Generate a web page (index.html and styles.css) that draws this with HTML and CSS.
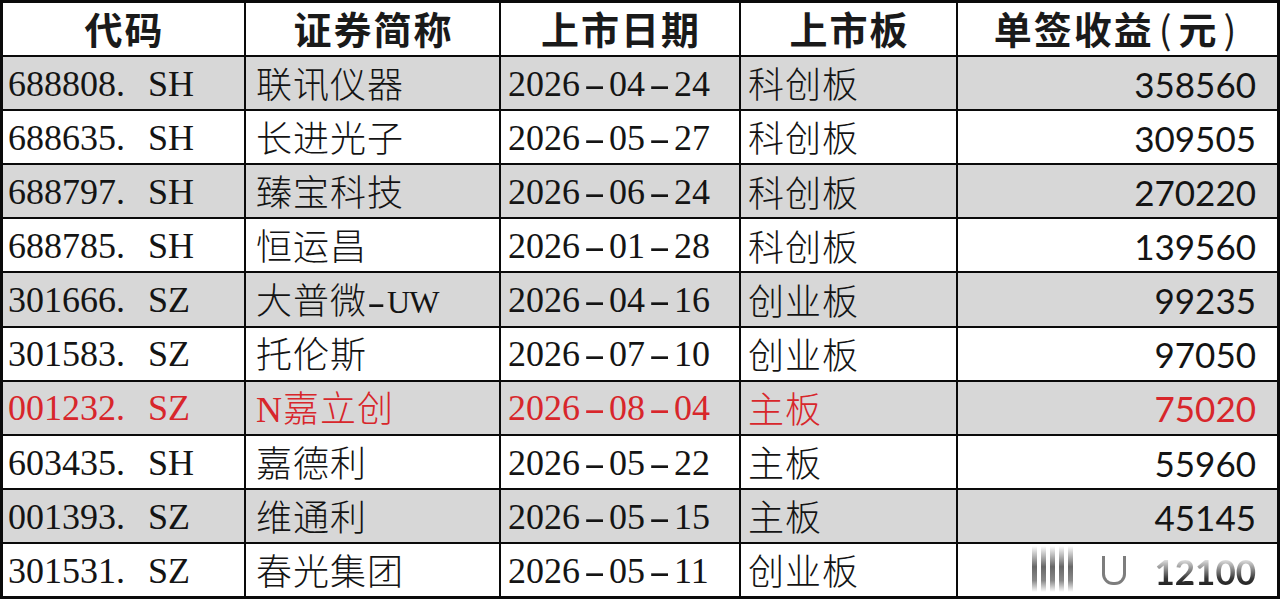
FILE: index.html
```html
<!DOCTYPE html>
<html lang="zh-CN">
<head>
<meta charset="utf-8">
<title>新股单签收益</title>
<link rel="stylesheet" href="styles.css">
</head>
<body>
<div class="table">
  <div class="row head">
    <div class="cell">代码</div>
    <div class="cell">证券简称</div>
    <div class="cell">上市日期</div>
    <div class="cell">上市板</div>
    <div class="cell">单签收益<span class="paren">(</span>元<span class="paren">)</span></div>
  </div>
  <div class="row gray">
    <div class="cell code">688808. SH</div>
    <div class="cell name">联讯仪器</div>
    <div class="cell date">2026<span class="dash">-</span>04<span class="dash">-</span>24</div>
    <div class="cell board">科创板</div>
    <div class="cell num">358560</div>
  </div>
  <div class="row">
    <div class="cell code">688635. SH</div>
    <div class="cell name">长进光子</div>
    <div class="cell date">2026<span class="dash">-</span>05<span class="dash">-</span>27</div>
    <div class="cell board">科创板</div>
    <div class="cell num">309505</div>
  </div>
  <div class="row gray">
    <div class="cell code">688797. SH</div>
    <div class="cell name">臻宝科技</div>
    <div class="cell date">2026<span class="dash">-</span>06<span class="dash">-</span>24</div>
    <div class="cell board">科创板</div>
    <div class="cell num">270220</div>
  </div>
  <div class="row">
    <div class="cell code">688785. SH</div>
    <div class="cell name">恒运昌</div>
    <div class="cell date">2026<span class="dash">-</span>01<span class="dash">-</span>28</div>
    <div class="cell board">科创板</div>
    <div class="cell num">139560</div>
  </div>
  <div class="row gray">
    <div class="cell code">301666. SZ</div>
    <div class="cell name">大普微<span class="dash">-</span><span class="latin">UW</span></div>
    <div class="cell date">2026<span class="dash">-</span>04<span class="dash">-</span>16</div>
    <div class="cell board">创业板</div>
    <div class="cell num">99235</div>
  </div>
  <div class="row">
    <div class="cell code">301583. SZ</div>
    <div class="cell name">托伦斯</div>
    <div class="cell date">2026<span class="dash">-</span>07<span class="dash">-</span>10</div>
    <div class="cell board">创业板</div>
    <div class="cell num">97050</div>
  </div>
  <div class="row gray red">
    <div class="cell code">001232. SZ</div>
    <div class="cell name">N嘉立创</div>
    <div class="cell date">2026<span class="dash">-</span>08<span class="dash">-</span>04</div>
    <div class="cell board">主板</div>
    <div class="cell num">75020</div>
  </div>
  <div class="row">
    <div class="cell code">603435. SH</div>
    <div class="cell name">嘉德利</div>
    <div class="cell date">2026<span class="dash">-</span>05<span class="dash">-</span>22</div>
    <div class="cell board">主板</div>
    <div class="cell num">55960</div>
  </div>
  <div class="row gray">
    <div class="cell code">001393. SZ</div>
    <div class="cell name">维通利</div>
    <div class="cell date">2026<span class="dash">-</span>05<span class="dash">-</span>15</div>
    <div class="cell board">主板</div>
    <div class="cell num">45145</div>
  </div>
  <div class="row">
    <div class="cell code">301531. SZ</div>
    <div class="cell name">春光集团</div>
    <div class="cell date">2026<span class="dash">-</span>05<span class="dash">-</span>11</div>
    <div class="cell board">创业板</div>
    <div class="cell num last">
      <span class="faded">12100</span>
      <span class="streaks"><i></i><i></i><i></i><i></i><i></i></span>
      <span class="ushape"></span>
    </div>
  </div>
</div>
</body>
</html>
```

FILE: styles.css
```css
html, body {
  margin: 0;
  padding: 0;
  background: #ffffff;
}

.table {
  width: 1280px;
  height: 599px;
  box-sizing: border-box;
  padding: 3px;
  background: #0a0a0a;
  display: flex;
  flex-direction: column;
  gap: 2px;
  color: #141414;
}

.row {
  flex: 1 1 0;
  min-height: 0;
  display: grid;
  grid-template-columns: 241px 253px 238px 215px 1fr;
  gap: 2px;
}

.cell {
  background: #ffffff;
  display: flex;
  align-items: center;
  white-space: nowrap;
  line-height: 1.1;
  min-height: 0;
}

.gray .cell {
  background: #d7d7d7;
}

.red .cell {
  color: #d8262b;
}

.head .cell {
  justify-content: center;
  font-family: "Noto Sans CJK SC", sans-serif;
  font-weight: 700;
  font-size: 38px;
  letter-spacing: 2px;
  padding-left: 2px;
  padding-bottom: 2px;
  color: #1a1a1a;
}

.head .paren {
  font-weight: 400;
  margin: 0 5px;
}

.code {
  font-family: "Liberation Serif", "Noto Sans CJK SC", serif;
  font-size: 36px;
  word-spacing: 14px;
  padding-left: 5px;
  padding-top: 3px;
}

.date {
  font-family: "Liberation Serif", "Noto Sans CJK SC", serif;
  font-size: 36px;
  padding-left: 7px;
  padding-top: 3px;
}

.dash {
  display: inline-block;
  width: 29px;
  text-align: center;
  transform: scaleX(1.8);
}

.name .dash {
  width: 20px;
  transform: scaleX(1.5);
}

.latin {
  display: inline-block;
  font-size: 32px;
  letter-spacing: -1px;
}

.name {
  font-family: "Liberation Serif", "Noto Sans CJK SC", serif;
  font-size: 36px;
  font-weight: 300;
  letter-spacing: 1px;
  padding-left: 10px;
  padding-top: 7px;
}

.board {
  font-family: "Noto Sans CJK SC", sans-serif;
  font-size: 36px;
  font-weight: 300;
  letter-spacing: 1px;
  padding-left: 7px;
}

.num {
  justify-content: flex-end;
  font-family: "Lato", "Open Sans", sans-serif;
  font-size: 35px;
  padding-right: 21px;
  padding-top: 2px;
}

.last {
  position: relative;
}

.faded {
  -webkit-mask-image: linear-gradient(to bottom, rgba(0,0,0,0.05) 15%, rgba(0,0,0,0.85) 70%, #000 100%);
  mask-image: linear-gradient(to bottom, rgba(0,0,0,0.05) 15%, rgba(0,0,0,0.85) 70%, #000 100%);
  font-weight: 700;
}

.streaks {
  position: absolute;
  left: 74px;
  top: 2px;
  height: 46px;
  display: flex;
  gap: 4px;
}

.streaks i {
  display: block;
  width: 5px;
  height: 100%;
  background: linear-gradient(to bottom, rgba(80,80,80,0) 0%, rgba(40,40,40,0.7) 45%, rgba(40,40,40,0.55) 75%, rgba(80,80,80,0) 100%);
}

.ushape {
  position: absolute;
  left: 144px;
  top: 12px;
  width: 18px;
  height: 26px;
  border: 3px solid rgba(70,70,70,0.7);
  border-top: none;
  border-radius: 0 0 11px 11px;
}
```
